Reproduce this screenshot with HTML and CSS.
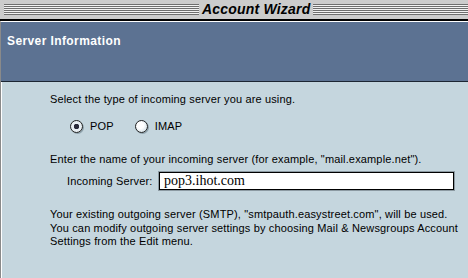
FILE: index.html
```html
<!DOCTYPE html>
<html>

<head>
  <meta charset="utf-8">
  <title>Account Wizard</title>
  <link rel="stylesheet" href="styles.css">
</head>

<body>
  <div class="titlebar">
    <div class="stripes stripes-left"></div>
    <div class="title">Account Wizard</div>
    <div class="stripes stripes-right"></div>
  </div>

  <div class="window">
    <div class="header">
      <h2>Server Information</h2>
    </div>

    <div class="content">
      <p class="line first">Select the type of incoming server you are using.</p>

      <div class="radios">
        <label class="radio"><span class="dot checked"></span>POP</label>
        <label class="radio"><span class="dot"></span>IMAP</label>
      </div>

      <p class="line second">Enter the name of your incoming server (for example, "mail.example.net").</p>

      <div class="field">
        <span class="field-label">Incoming Server:</span>
        <div class="field-input">pop3.ihot.com</div>
      </div>

      <p class="note">
        Your existing outgoing server (SMTP), "smtpauth.easystreet.com", will be used.<br>
        You can modify outgoing server settings by choosing Mail &amp; Newsgroups Account<br>
        Settings from the Edit menu.
      </p>
    </div>
  </div>
</body>

</html>
```

FILE: styles.css
```css
* {
  margin: 0;
  padding: 0;
  box-sizing: border-box;
}

body {
  font-family: 'Liberation Sans', Arial, sans-serif;
  font-size: 11px;
  color: #000;
  background: #c5d6de;
  width: 468px;
  height: 278px;
  overflow: hidden;
}

/* title bar */
.titlebar {
  display: flex;
  height: 21px;
  background: #cccccc;
  border-bottom: 2px solid #000;
}

.stripes {
  height: 11px;
  margin-top: 4px;
  background: repeating-linear-gradient(#6e6e6e 0 1px, #f2f2f2 1px 2px);
}

.stripes-left {
  width: 195px;
  margin-left: 4px;
}

.stripes-right {
  flex: 1;
}

.title {
  padding: 0 3px 0 3px;
  font-size: 14px;
  font-weight: bold;
  font-style: italic;
  line-height: 19px;
  letter-spacing: 0.2px;
}

/* window */
.window {
  border-top: 1px solid #fff;
  border-left: 1px solid #8a8a8a;
  box-shadow: inset 1px 0 0 #fff;
  height: 257px;
}

.header {
  height: 60px;
  background: #5c7292;
  border-bottom: 1px solid #1c2633;
  padding: 12px 6px;
}

.header h2 {
  color: #fff;
  font-size: 12px;
  font-weight: bold;
  letter-spacing: 0.4px;
  line-height: 14px;
}

.content {
  padding-left: 49px;
  letter-spacing: 0.15px;
}

.line {
  line-height: 13px;
}

.first {
  margin-top: 11px;
}

.radios {
  display: flex;
  gap: 21px;
  margin-top: 13px;
  margin-left: 20px;
  height: 14px;
}

.radio {
  display: flex;
  align-items: center;
  gap: 7px;
  line-height: 14px;
}

.dot {
  width: 13px;
  height: 13px;
  border: 1px solid #222;
  border-radius: 50%;
  background: radial-gradient(circle at 40% 40%, #ffffff 0 35%, #d8e4ea 75%);
  box-shadow: 1px 1px 0 #8fa3ad;
}

.dot.checked {
  background: radial-gradient(circle at 50% 50%, #2a2a3a 0 2.5px, #e8eef2 3px);
}

.second {
  margin-top: 20px;
}

.field {
  display: flex;
  align-items: center;
  margin-top: 6px;
  margin-left: 17px;
  height: 18px;
}

.field-label {
  width: 92px;
}

.field-input {
  width: 295px;
  height: 18px;
  background: #fff;
  border: 1px solid #000;
  box-shadow: 0 0 0 1px #8c9aa2;
  font-family: 'Liberation Serif', 'Times New Roman', serif;
  font-size: 14px;
  line-height: 16px;
  padding-left: 4px;
  letter-spacing: 0;
}

.note {
  margin-top: 18px;
  line-height: 13.5px;
}
```
